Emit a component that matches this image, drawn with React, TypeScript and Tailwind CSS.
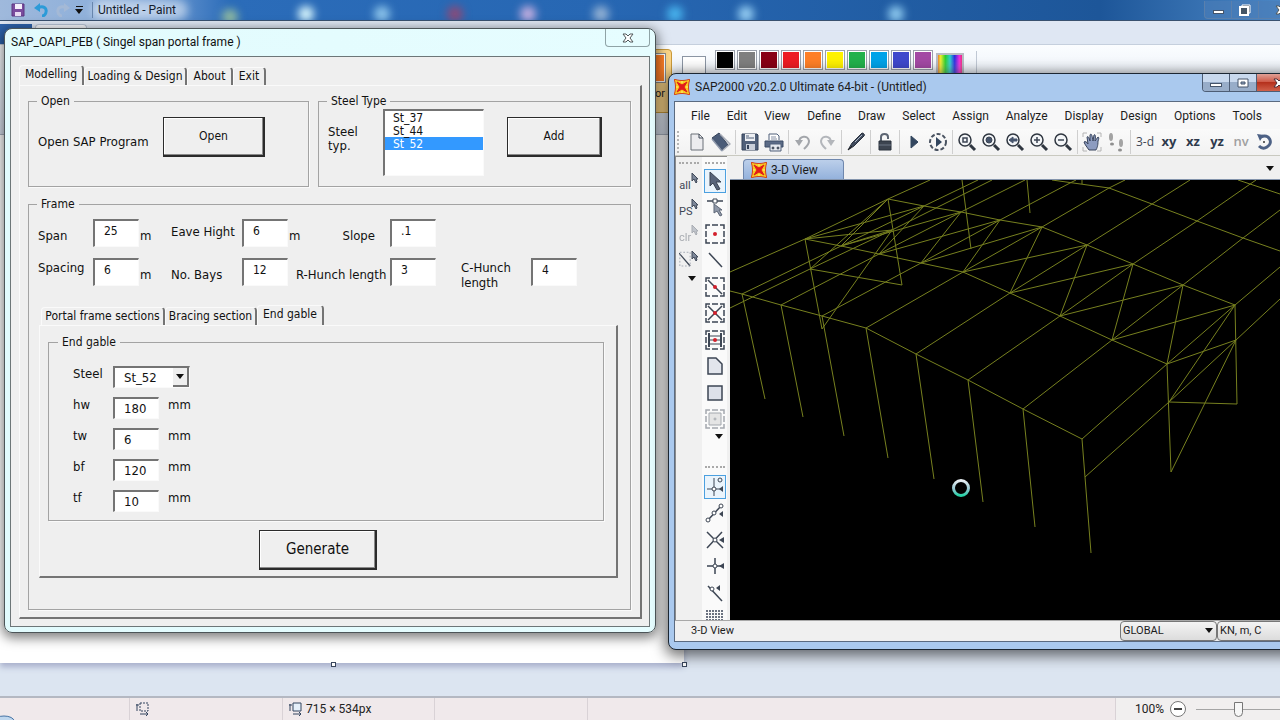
import { useState, type ReactNode } from "react";

const swatches = [
  "bg-black",
  "bg-[#7f7f7f]",
  "bg-[#880015]",
  "bg-[#ed1c24]",
  "bg-[#ff7f27]",
  "bg-[#fff200]",
  "bg-[#22b14c]",
  "bg-[#00a2e8]",
  "bg-[#3f48cc]",
  "bg-[#a349a4]",
];

const menus = [
  "File",
  "Edit",
  "View",
  "Define",
  "Draw",
  "Select",
  "Assign",
  "Analyze",
  "Display",
  "Design",
  "Options",
  "Tools",
];

// polylines of the portal frame model
const frameLines = [
  "0,92 75,59 158,19 200,0",
  "0,128 80,89 162,50 262,0",
  "12,114 111,66 194,26 248,0",
  "51,125 149,74 231,32 295,0",
  "92,136 191,83 270,40 340,3 346,0",
  "136,148 233,92 312,47 379,8 395,0",
  "186,174 280,113 357,65 422,24 460,0",
  "238,200 330,136 403,84 467,41 526,0",
  "293,229 382,160 453,105 513,58 550,30 590,0",
  "352,259 437,184 505,125 550,87 600,45",
  "355,297 439,222 506,160 550,119 600,72",
  "0,111 12,114 51,125 92,136 136,148 186,174 238,200 293,229 352,259",
  "75,59 111,66 149,74 191,83 233,92 280,113 330,136 382,160 437,184",
  "158,19 194,26 231,32 270,40 312,47 357,65 403,84 453,105 505,125",
  "322,0 379,8 422,24 467,41 513,58 550,71 600,90",
  "508,0 520,4 550,14 600,32",
  "12,114 35,219",
  "51,125 73,237",
  "92,136 114,256",
  "136,148 158,278",
  "186,174 204,299",
  "238,200 253,322",
  "293,229 305,347",
  "352,259 361,373",
  "158,19 172,105 80,89",
  "75,59 92,149 162,50",
  "232,0 241,69",
  "297,0 300,33",
  "352,0 352,4",
  "158,19 80,89",
  "158,19 111,66",
  "75,59 162,50",
  "75,59 194,26",
  "111,66 162,50",
  "111,66 231,32",
  "149,74 194,26",
  "149,74 270,40",
  "191,83 231,32",
  "191,83 312,47",
  "233,92 270,40",
  "233,92 357,65",
  "280,113 312,47",
  "280,113 403,84",
  "330,136 357,65",
  "330,136 453,105",
  "382,160 403,84",
  "382,160 505,125",
  "437,184 453,105",
  "437,184 506,160",
  "439,222 505,125",
  "439,222 507,224 505,125",
  "437,184 441,292 506,160",
];

function Svg({ children, size = "size-5" }: { children: ReactNode; size?: string }) {
  return (
    <svg viewBox="0 0 20 20" fill="none" stroke="#3d4654" className={`${size} shrink-0`} aria-hidden="true">
      {children}
    </svg>
  );
}

function SapLogo() {
  return (
    <svg viewBox="0 0 16 16" className="size-4 shrink-0" aria-hidden="true">
      <path d="M0 0C5 2 11 2 16 0C14 5 14 11 16 16C11 14 5 14 0 16C2 11 2 5 0 0Z" fill="#f9c81e" stroke="#d2401c" />
      <path d="M3 3L8 6L13 3L10 8L13 13L8 10L3 13L6 8Z" fill="#e11b1b" stroke="#e11b1b" />
      <path d="M8 2V4M8 12V14M2 8H4M12 8H14" stroke="#fff27a" />
    </svg>
  );
}

function CloseGlyph({ stroke = "#50585a" }: { stroke?: string }) {
  return (
    <svg viewBox="0 0 12 10" className="h-[10px] w-3 shrink-0" aria-hidden="true">
      <path d="M1 1H4L6 3L8 1H11L8 5L11 9H8L6 7L4 9H1L4 5Z" fill="#fff" stroke={stroke} />
    </svg>
  );
}

const docIcon = (
  <Svg>
    <path d="M4 2H12L16 6V18H4Z" fill="#ececef" stroke="#6b7078" />
    <path d="M12 2V6H16" stroke="#3d4654" />
  </Svg>
);
const openIcon = (
  <Svg>
    <path d="M1 6L8 1L17 13L11 18Z" fill="#4b5c78" stroke="#35435a" />
    <path d="M9 2L19 12L11 19" fill="none" stroke="#a8adb8" strokeWidth="1.5" />
    <path d="M1 7L11 19" stroke="#8c97ab" strokeWidth="1.5" />
  </Svg>
);
const saveIcon = (
  <Svg>
    <path d="M2 2H17L18 3V18H2Z" fill="#50607a" stroke="#35435a" />
    <path d="M5 2H15V9H5Z" fill="#eef0f4" stroke="none" />
    <path d="M6 4H9M6 6H14" stroke="#50607a" />
    <path d="M6 12H15V18H6Z" fill="#c9cfda" stroke="none" />
    <path d="M8 13V17" stroke="#35435a" strokeWidth="2" />
  </Svg>
);
const printIcon = (
  <Svg>
    <path d="M5 8V2H13L15 4V8" fill="#fff" stroke="#50607a" />
    <path d="M7 5H12M7 7H13" stroke="#8791a5" />
    <path d="M1 9H19V15H1Z" fill="#5b6b86" stroke="#3d4c66" />
    <path d="M6 12H17V19H6Z" fill="#e5e8ee" stroke="#50607a" />
    <circle cx="9" cy="16" r="1" fill="#50607a" />
    <circle cx="14" cy="16" r="1" fill="#50607a" />
  </Svg>
);
const undoIcon = (
  <Svg>
    <path d="M6 11C6 3 15 3 16 9C16 13 13 15 11 17" stroke="#a3a6ab" strokeWidth="2" />
    <path d="M2 8H10L6 14Z" fill="#a3a6ab" stroke="none" />
  </Svg>
);
const redoIcon = (
  <Svg>
    <path d="M14 11C14 3 5 3 4 9C4 13 7 15 9 17" stroke="#b3b6bb" strokeWidth="2" />
    <path d="M18 8H10L14 14Z" fill="#b3b6bb" stroke="none" />
  </Svg>
);
const penIcon = (
  <Svg>
    <path d="M2 18L6 11L16 1C18 1 19 3 18 4L8 14Z" fill="#3f4a5c" stroke="#2a3240" />
    <path d="M9 10L16 3" stroke="#aeb8c8" />
    <path d="M2 18L6 14" stroke="#222" />
  </Svg>
);
const lockIcon = (
  <Svg>
    <path d="M6 9V5C6 1 13 1 13 5V7" stroke="#5d6673" strokeWidth="2" />
    <path d="M4 9H16V18H4Z" fill="#3c4450" stroke="#2b323c" />
    <path d="M4 13H16" stroke="#6d7785" />
  </Svg>
);
const playIcon = (
  <Svg>
    <path d="M7 4L14 10L7 16Z" fill="#33465f" stroke="#33465f" />
  </Svg>
);
const runIcon = (
  <Svg>
    <circle cx="10" cy="10" r="8" stroke="#4a5361" strokeWidth="2" strokeDasharray="4 2" />
    <path d="M8 5L14 10L8 15Z" fill="#33465f" stroke="none" />
  </Svg>
);
const lens = (inner: ReactNode) => (
  <Svg>
    <circle cx="8" cy="8" r="6" fill="#f4f6f8" stroke="#2f3640" strokeWidth="1.5" />
    <path d="M13 13L18 18" stroke="#2f3640" strokeWidth="3" />
    {inner}
  </Svg>
);
const handIcon = (
  <Svg>
    <path d="M1 5V1H5M15 1H19V5M19 15V19H15M5 19H1V15" stroke="#b4b4b4" />
    <path
      d="M7 18C5 15 3 13 2 10C3 9 5 10 6 12L5 5C6 4 7 5 8 9L8 3C9 1 10 2 11 9L12 3C13 2 14 3 13 9L16 5C17 5 17 7 16 9C16 14 15 16 14 18Z"
      fill="#8d9cc0"
      stroke="#38445c"
    />
  </Svg>
);
const feetIcon = (
  <Svg>
    <ellipse cx="5" cy="5" rx="2" ry="4" fill="#a3a3a3" stroke="none" />
    <ellipse cx="6" cy="12" rx="2" ry="1.5" fill="#8f8f8f" stroke="none" />
    <ellipse cx="15" cy="11" rx="2" ry="4" fill="#a3a3a3" stroke="none" />
    <ellipse cx="14" cy="18" rx="2" ry="1.5" fill="#8f8f8f" stroke="none" />
  </Svg>
);
const rotateIcon = (
  <Svg>
    <path d="M6 5C14 1 19 11 12 15C9 17 6 16 4 14" stroke="#4d6185" strokeWidth="3" />
    <path d="M2 2L9 3L5 9Z" fill="#4d6185" stroke="none" />
    <circle cx="9" cy="10" r="1" fill="#333" stroke="none" />
  </Svg>
);
const eraserIcon = (
  <Svg>
    <path d="M2 13L9 5L17 8L11 16H3Z" fill="#dfe3ea" stroke="#3d4654" />
  </Svg>
);

type Tool = { name: string; icon?: ReactNode; text?: string; tone?: string };

const toolGroups: Tool[][] = [
  [
    { name: "New model", icon: docIcon },
    { name: "Open file", icon: openIcon },
  ],
  [
    { name: "Save", icon: saveIcon },
    { name: "Print", icon: printIcon },
  ],
  [
    { name: "Undo", icon: undoIcon },
    { name: "Redo", icon: redoIcon },
  ],
  [{ name: "Refresh window", icon: penIcon }],
  [{ name: "Lock model", icon: lockIcon }],
  [
    { name: "Run analysis", icon: playIcon },
    { name: "Model-alive", icon: runIcon },
  ],
  [
    { name: "Rubber band zoom", icon: lens(<path d="M6 6H10V10H6Z" strokeWidth="1.5" />) },
    { name: "Full view", icon: lens(<circle cx="8" cy="8" r="3" fill="#46546c" />) },
    { name: "Previous zoom", icon: lens(<path d="M4 8L8 5V7H12V9H8V11Z" fill="#46546c" stroke="#46546c" />) },
    { name: "Zoom in", icon: lens(<path d="M5 8H11M8 5V11" strokeWidth="1.5" />) },
    { name: "Zoom out", icon: lens(<path d="M5 8H11" strokeWidth="1.5" />) },
  ],
  [
    { name: "Pan", icon: handIcon },
    { name: "Walk", icon: feetIcon },
  ],
  [
    { name: "3-d view", text: "3-d", tone: "text-[#3d4654]" },
    { name: "xy view", text: "xy", tone: "font-bold text-[#2f3a4c]" },
    { name: "xz view", text: "xz", tone: "font-bold text-[#2f3a4c]" },
    { name: "yz view", text: "yz", tone: "font-bold text-[#2f3a4c]" },
    { name: "nv view", text: "nv", tone: "font-semibold text-[#a0a0a0]" },
    { name: "Rotate 3D", icon: rotateIcon },
    { name: "Perspective", icon: eraserIcon },
  ],
];

const dashBox = <path d="M1 5V1H5M7 1H13M15 1H19V5M19 7V13M19 15V19H15M13 19H7M5 19H1V15M1 13V7" strokeWidth="1.5" />;
const redDot = <circle cx="10" cy="10" r="2" fill="#d3202c" stroke="none" />;
const leftArrow = <path d="M19 7V13L14 10Z" fill="#3d4654" stroke="none" />;

const drawTools: { name: string; icon: ReactNode; active?: boolean }[] = [
  {
    name: "Pointer",
    active: true,
    icon: (
      <Svg>
        <path d="M5 1V15L8 12L12 19L15 18L11 11H16Z" fill="#58647a" stroke="#3a4352" />
      </Svg>
    ),
  },
  {
    name: "Reshape",
    icon: (
      <Svg>
        <path d="M2 4H8M12 4H18" strokeWidth="1.5" />
        <path d="M8 2H12V6H8Z" fill="#fff" />
        <path d="M9 7V16L12 14L15 19L17 18L14 13H17Z" fill="#8f98a8" stroke="#5f6878" />
      </Svg>
    ),
  },
  { name: "Draw joint", icon: <Svg>{dashBox}{redDot}</Svg> },
  {
    name: "Draw frame",
    icon: (
      <Svg>
        <path d="M4 3L17 17" strokeWidth="1.5" />
      </Svg>
    ),
  },
  {
    name: "Quick draw frame",
    icon: (
      <Svg>
        {dashBox}
        <path d="M3 3L17 17" strokeWidth="1.5" />
        {redDot}
      </Svg>
    ),
  },
  {
    name: "Quick draw braces",
    icon: (
      <Svg>
        {dashBox}
        <path d="M3 3L17 17M17 3L3 17" strokeWidth="1.5" />
        {redDot}
      </Svg>
    ),
  },
  {
    name: "Quick draw secondary beams",
    icon: (
      <Svg>
        {dashBox}
        <path d="M4 3V17M16 3V17" strokeWidth="2" />
        <path d="M5 6H15M5 10H15M5 14H15" />
        {redDot}
      </Svg>
    ),
  },
  {
    name: "Draw poly area",
    icon: (
      <Svg>
        <path d="M3 2H11L17 8V18H3Z" fill="#e2e5ec" strokeWidth="1.5" />
      </Svg>
    ),
  },
  {
    name: "Draw rectangular area",
    icon: (
      <Svg>
        <path d="M3 3H17V17H3Z" fill="#dde1ea" strokeWidth="1.5" />
      </Svg>
    ),
  },
  {
    name: "Quick draw area",
    icon: (
      <Svg>
        <g opacity="0.45">
          {dashBox}
          <path d="M4 4H16V16H4Z" fill="#ccc" />
          <circle cx="10" cy="10" r="1" />
        </g>
      </Svg>
    ),
  },
];

const snapTools: { name: string; icon: ReactNode; active?: boolean }[] = [
  {
    name: "Snap to points",
    active: true,
    icon: (
      <Svg>
        <path d="M9 1V19M2 12H16" />
        <circle cx="9" cy="12" r="2" fill="#fff" />
        <circle cx="15" cy="3" r="2" />
        <path d="M18 9V15L14 12Z" fill="#3d4654" stroke="none" />
      </Svg>
    ),
  },
  {
    name: "Snap to ends",
    icon: (
      <Svg>
        <path d="M3 17L16 3" strokeWidth="1.5" />
        <circle cx="3" cy="17" r="2" fill="#fff" />
        <circle cx="9" cy="10" r="2" fill="#fff" />
        <circle cx="16" cy="3" r="2" fill="#fff" />
        <path d="M18 8V14L14 11Z" fill="#3d4654" stroke="none" />
      </Svg>
    ),
  },
  {
    name: "Snap to intersections",
    icon: (
      <Svg>
        <path d="M2 2L18 18M17 2L2 18" strokeWidth="1.5" />
        <circle cx="10" cy="10" r="2" fill="#fff" />
        {leftArrow}
      </Svg>
    ),
  },
  {
    name: "Snap to perpendicular",
    icon: (
      <Svg>
        <path d="M10 2V18M2 10H16" strokeWidth="1.5" />
        <circle cx="10" cy="10" r="2" fill="#fff" />
        {leftArrow}
      </Svg>
    ),
  },
  {
    name: "Snap to lines",
    icon: (
      <Svg>
        <path d="M3 3L17 18" strokeWidth="1.5" />
        <circle cx="7" cy="6" r="2" fill="#fff" />
        <path d="M15 2V8L11 5Z" fill="#3d4654" stroke="none" />
      </Svg>
    ),
  },
  {
    name: "Snap to fine grid",
    icon: (
      <Svg>
        <path d="M1 2H19M1 5H19M1 8H19M1 11H19M1 14H19" stroke="#6b7280" strokeWidth="2" strokeDasharray="2 1" />
      </Svg>
    ),
  },
];

function SideButton({ name, icon, active }: { name: string; icon: ReactNode; active?: boolean }) {
  return (
    <button
      type="button"
      aria-label={name}
      className={`flex h-6 w-[22px] shrink-0 items-center justify-center border ${
        active ? "border-[#4ba0e0] bg-[#eaf4fc]" : "border-transparent"
      }`}
    >
      {icon}
    </button>
  );
}

function SelectButton({ name, text, faded }: { name: string; text?: string; faded?: boolean }) {
  return (
    <button
      type="button"
      aria-label={name}
      className={`mb-[2px] flex h-6 w-[20px] items-start text-[11px] text-[#3d4654] ${faded ? "opacity-40" : ""}`}
    >
      {text ? (
        <span className="w-3 shrink-0 pt-[6px]">{text}</span>
      ) : (
        <svg viewBox="0 0 14 20" className="h-5 w-3 shrink-0" aria-hidden="true">
          <path d="M0 2L13 17" stroke="#3d4654" strokeWidth="1.5" />
          <path d="M1 1H13V17H1Z" fill="none" stroke="#9aa2ae" strokeDasharray="2 2" />
        </svg>
      )}
      <svg viewBox="0 0 8 12" className="h-3 w-2 shrink-0" aria-hidden="true">
        <path d="M1 1V9L3 7L5 11L6 10L5 7H7Z" fill="#7d8799" stroke="#3f4858" />
      </svg>
    </button>
  );
}

function Grip() {
  return <div className="mb-1 h-[2px] w-5 shrink-0 border-t-2 border-dotted border-[#a9a9a9]" />;
}

function DropTriangle() {
  return (
    <svg viewBox="0 0 8 5" className="h-[5px] w-2 shrink-0" aria-hidden="true">
      <path d="M0 0H8L4 5Z" fill="#111" />
    </svg>
  );
}

function PaintWindow() {
  return (
    <div className="flex min-h-screen flex-col font-[Roboto,'Open_Sans',sans-serif] text-[12px] text-[#222]">
      <header className="relative flex h-[21px] shrink-0 items-center overflow-hidden border-b border-[#39516f] bg-[linear-gradient(90deg,#9fb9dc_0,#8fb0da_90px,#6f9bd2_160px,#2b6cb9_230px,#2767b3_600px,#1d5699_1100px,#4b86c4_1280px)]">
        <span className="absolute left-[222px] top-[9px] size-4 rounded-full bg-[#8fb9a0] blur-xs" />
        <span className="absolute left-[298px] top-[6px] size-4 rounded-full bg-[#d5f4fc] blur-xs" />
        <span className="absolute left-[374px] top-[6px] size-4 rounded-full bg-[#8cc4ea] blur-xs" />
        <span className="absolute left-[447px] top-[6px] size-4 rounded-full bg-[#8a4a78] blur-xs" />
        <span className="absolute left-[520px] top-[6px] size-4 rounded-full bg-[#c3aee0] blur-xs" />
        <span className="absolute left-[593px] top-[6px] size-4 rounded-full bg-[#94b2d4] blur-xs" />
        <span className="absolute left-[667px] top-[6px] size-4 rounded-full bg-[#48b4ee] blur-xs" />
        <span className="absolute left-[738px] top-[6px] size-4 rounded-full bg-[#94cdf2] blur-xs" />
        <span className="absolute left-[888px] top-[6px] size-4 rounded-full bg-[#8cc8ee] blur-xs" />
        <span className="absolute left-[92px] top-0 h-5 w-24 rounded-full bg-white/50 blur-xs" />
        <div className="relative flex w-full items-center">
          <button type="button" aria-label="Save" className="ml-[11px] mr-[9px]">
            <svg viewBox="0 0 14 14" className="size-[14px]" aria-hidden="true">
              <path d="M1 1H13V13H1Z" fill="#7a4c9e" stroke="#5c3680" />
              <path d="M4 1H11V6H4Z" fill="#f4eefa" />
              <path d="M4 9H10V13H4Z" fill="#e7d9f2" />
            </svg>
          </button>
          <button type="button" aria-label="Undo" className="mr-[8px]">
            <svg viewBox="0 0 14 14" className="size-[14px]" aria-hidden="true">
              <path d="M4 5C9 2 13 5 12 9C12 11 10 13 8 13" fill="none" stroke="#2c9bd8" strokeWidth="3" />
              <path d="M0 5L6 0V9Z" fill="#2c9bd8" />
            </svg>
          </button>
          <button type="button" aria-label="Redo" className="mr-[5px]">
            <svg viewBox="0 0 14 14" className="size-[14px]" aria-hidden="true">
              <path d="M10 5C5 2 1 5 2 9C2 11 4 13 6 13" fill="none" stroke="#a4b9d6" strokeWidth="3" />
              <path d="M14 5L8 0V9Z" fill="#a4b9d6" />
            </svg>
          </button>
          <button type="button" aria-label="Customize toolbar" className="flex flex-col items-center gap-[2px] border-r border-[#6886ad] py-[4px] pr-[9px]">
            <span className="h-px w-[7px] bg-[#111]" />
            <DropTriangle />
          </button>
          <h1 className="ml-[5px] text-[12px] leading-5 text-[#14202e]">Untitled - Paint</h1>
          <div className="ml-auto -mr-[24px] flex h-[18px] rounded-b border border-t-0 border-[#5a80ad] bg-[#4b7db8]/60">
            <button type="button" aria-label="Minimize" className="flex w-[27px] items-center justify-center border-r border-[#5a80ad]">
              <span className="mt-1 h-1 w-[11px] border border-[#44546b] bg-white" />
            </button>
            <button type="button" aria-label="Restore" className="flex w-[27px] items-center justify-center border-r border-[#5a80ad]">
              <svg viewBox="0 0 12 12" className="size-3" aria-hidden="true">
                <path d="M3 1H11V9H3Z" fill="#456" stroke="#fff" />
                <path d="M1 3H9V11H1Z" fill="#456" stroke="#fff" strokeWidth="2" />
              </svg>
            </button>
            <button type="button" aria-label="Close Paint" className="flex w-[44px] items-center justify-center">
              <CloseGlyph />
            </button>
          </div>
        </div>
      </header>

      <div className="flex h-[24px] shrink-0 gap-[3px] border-b border-[#c5cfdd] bg-[#dfe7f3] pt-[3px]">
        <button type="button" aria-label="Paint menu" className="w-8 bg-[#2c62ab]" />
        <button type="button" aria-label="Home" className="w-[52px] rounded-t border border-b-0 border-[#b8c4d6] bg-[#fafcff]" />
      </div>

      <div className="flex h-[90px] shrink-0 items-start border-b border-[#a9b2c0] bg-[linear-gradient(#fbfdff,#eef3fa_30px,#d5dde9)] pl-[632px] pt-[4px]">
        <button type="button" className="h-16 w-[40px] shrink-0 rounded-sm border border-[#c99a3c] bg-[#fcd587] px-1 pt-[3px] text-[11px] leading-[13px]">
          <span className="mx-auto mb-1 block h-[30px] w-[28px] border border-[#8b8b8b] bg-[#ff7f27] outline-1 -outline-offset-2 outline-white" />
          Color 1
        </button>
        <button type="button" aria-label="Color 2" className="ml-[10px] mt-[7px] h-6 w-6 shrink-0 border border-[#8b95a3] bg-white" />
        <div className="ml-[9px] mt-[1px] flex gap-[2px]">
          {swatches.map((c) => (
            <button key={c} type="button" aria-label="Palette color" className="size-5 border border-[#9aa0ab] bg-white p-[1px]">
              <span className={`block size-4 ${c}`} />
            </button>
          ))}
        </div>
        <button
          type="button"
          aria-label="Edit colors"
          className="ml-[3px] mt-[4px] h-7 w-7 border-2 border-[#b8bcc4] bg-[linear-gradient(transparent,rgba(255,255,255,0.3)),linear-gradient(90deg,#e22,#ee2,#2c2,#2cc,#22d,#e2d,#e22)] bg-origin-border"
        />
        <span className="ml-3 mt-[2px] h-20 w-px bg-[#c0c8d4]" />
      </div>

      <main className="flex-1 bg-[#dce5f1]">
        <div className="relative h-[528px] w-[684px] bg-white shadow-[0_4px_6px_#a9b0cc]">
          <span className="absolute -bottom-[4px] left-[331px] size-[5px] border border-[#39465c] bg-white" />
          <span className="absolute -bottom-[4px] -right-[3px] size-[5px] border border-[#39465c] bg-white" />
        </div>
      </main>

      <footer className="flex h-6 shrink-0 items-center border-t-2 border-[#b4b8c2] bg-[#f0e9eb] leading-5">
        <span className="h-full w-[130px] border-r border-[#d9d2d6]">
          <svg viewBox="0 0 16 6" className="mt-4 h-[6px] w-4" aria-hidden="true">
            <ellipse cx="4" cy="7" rx="10" ry="5" fill="#bfd7ee" stroke="#4573a5" />
          </svg>
        </span>
        <span className="flex h-full w-[153px] items-center border-r border-[#d9d2d6] pl-[5px]">
          <svg viewBox="0 0 14 14" className="size-[14px]" fill="none" stroke="#33455f" aria-hidden="true">
            <path d="M1 3H4M2 2V9M5 12H13M11 10L13 12L11 14" />
            <path d="M5 1H13V9H5Z" strokeDasharray="2 1" />
          </svg>
        </span>
        <span className="flex h-full w-[152px] items-center gap-[4px] border-r border-[#d9d2d6] pl-[5px]">
          <svg viewBox="0 0 14 14" className="size-[14px]" fill="none" stroke="#33455f" aria-hidden="true">
            <path d="M1 3H4M2 2V9M5 12H13M11 10L13 12L11 14" />
            <path d="M5 1H13V9H5Z" fill="#e6f0fa" />
          </svg>
          715 × 534px
        </span>
        <span className="h-full w-[153px] border-r border-[#d9d2d6]" />
        <div className="-mr-10 ml-auto flex h-full items-center border-l border-[#d9d2d6] bg-[#f1efef] pl-[19px]">
          <span className="mr-[6px]">100%</span>
          <button type="button" aria-label="Zoom out" className="mr-[10px] flex size-4 items-center justify-center rounded-full border border-[#777] bg-white">
            <span className="h-[2px] w-2 bg-[#444]" />
          </button>
          <input
            type="range"
            aria-label="Zoom"
            defaultValue={33}
            className="h-4 w-[124px] appearance-none bg-[linear-gradient(#a5a5a5,#a5a5a5)] bg-[length:100%_1px] bg-center bg-no-repeat [&::-webkit-slider-thumb]:h-[15px] [&::-webkit-slider-thumb]:w-[9px] [&::-webkit-slider-thumb]:appearance-none [&::-webkit-slider-thumb]:rounded-b-md [&::-webkit-slider-thumb]:border [&::-webkit-slider-thumb]:border-[#777] [&::-webkit-slider-thumb]:bg-[#f7f7f7]"
          />
        </div>
      </footer>
    </div>
  );
}

const sunken = "border-t-2 border-l-2 border-b border-r border-t-[#747474] border-l-[#747474] border-b-[#fafafa] border-r-[#fafafa] bg-white";

function FrameInput({ id, value }: { id: string; value: string }) {
  return <input id={id} type="text" defaultValue={value} className={`h-7 w-[46px] px-[9px] pb-[6px] text-[12px] ${sunken}`} />;
}

const tabBase =
  "flex items-center justify-center whitespace-nowrap rounded-t-sm border-l border-t border-r-2 border-l-[#fafafa] border-t-[#fafafa] border-r-[#747474] text-[12px]";
const tabPanel = "border-b-2 border-l border-r-2 border-t border-[#747474] border-l-[#fafafa] border-t-[#fafafa]";
const groupBox = "border border-[#a3a3a3] shadow-[1px_1px_0_#fafafa]";
const pushButton = "border border-b-2 border-r-2 border-[#2b2b2b] bg-[#efefef] shadow-[inset_-1px_-1px_0_#8a8a8a,inset_1px_1px_0_#fff]";

function PebDialog() {
  const [page, setPage] = useState("Modelling");
  const [sections, setSections] = useState("End gable");

  return (
    <section className="absolute left-[4px] top-[28px] w-[652px] rounded-lg border border-[#4c5558] bg-[linear-gradient(90deg,#e2fbfd,#e6fdff)] px-[5px] pb-[5px] font-['DejaVu_Sans_Condensed','DejaVu_Sans',sans-serif] text-[13px] leading-[15px] text-[#111] shadow-[0_3px_12px_2px_rgba(0,0,0,0.5)]">
      <div className="flex h-[27px] items-start justify-between">
        <h2 className="pl-[1px] pt-[4px] font-[Roboto,'Open_Sans',sans-serif] text-[12px] leading-[18px]">
          SAP_OAPI_PEB ( Singel span portal frame )
        </h2>
        <button type="button" aria-label="Close" className="flex h-[18px] w-[45px] items-center justify-center rounded-b border border-t-0 border-[#8fa3a6]">
          <CloseGlyph />
        </button>
      </div>

      <div className="border border-[#6d7678] bg-[#efefef] pb-[7px] pl-[8px] pr-[7px] pt-[8px]">
        <div className="flex items-end" role="tablist">
          {[
            ["Modelling", "w-[65px]"],
            ["Loading & Design", "w-[103px]"],
            ["About", "w-[46px]"],
            ["Exit", "w-[33px]"],
          ].map(([name, width]) => (
            <button
              key={name}
              type="button"
              role="tab"
              aria-selected={page === name}
              onClick={() => setPage(name)}
              className={`${tabBase} ${width} ${page === name ? "h-5 pb-[2px]" : "h-[18px]"}`}
            >
              {name}
            </button>
          ))}
        </div>

        <div className={`pb-[7px] pl-[8px] pr-[9px] pt-[7px] ${tabPanel}`}>
          <div className="flex gap-[9px]">
            <fieldset className={`flex h-[94px] w-[281px] px-[9px] ${groupBox}`}>
              <legend className="ml-[-1px] px-1 text-[12px] leading-4">Open</legend>
              <div className="flex items-start pt-[8px]">
                <span className="w-[125px] pt-[17px]">Open SAP Program</span>
                <button type="button" className={`h-10 w-[102px] text-[12px] ${pushButton}`}>
                  Open
                </button>
              </div>
            </fieldset>
            <fieldset className={`h-[94px] flex-1 px-[9px] ${groupBox}`}>
              <legend className="ml-[-1px] px-1 text-[12px] leading-4">Steel Type</legend>
              <div className="flex items-start">
                <label htmlFor="steel-type" className="w-[55px] pr-4 pt-[16px] leading-[14px]">
                  Steel typ.
                </label>
                <select
                  id="steel-type"
                  size={5}
                  defaultValue="St_52"
                  className={`h-[67px] w-[101px] overflow-hidden text-[12px] ${sunken}`}
                >
                  {["St_37", "St_44", "St_52"].map((s) => (
                    <option
                      key={s}
                      className="h-[13px] min-h-0 px-[8px] py-0 leading-[13px] checked:bg-[linear-gradient(#3399ff,#3399ff)] checked:text-white"
                    >
                      {s}
                    </option>
                  ))}
                </select>
                <button type="button" className={`ml-[23px] mt-[8px] h-10 w-[95px] text-[12px] ${pushButton}`}>
                  Add
                </button>
              </div>
            </fieldset>
          </div>

          <fieldset className={`mt-[9px] pb-[31px] pl-[9px] pr-[8px] ${groupBox}`}>
            <legend className="ml-[-1px] px-1 text-[12px] leading-4">Frame</legend>
            <div className="grid grid-cols-[55px_47px_31px_71px_47px_101px_47px_94px_47px] gap-y-[11px] pt-[7px]">
              <label htmlFor="span" className="self-end pb-1">Span</label>
              <FrameInput id="span" value="25" />
              <span className="self-end pb-1">m</span>
              <label htmlFor="eave" className="self-center pb-1">Eave Hight</label>
              <FrameInput id="eave" value="6" />
              <div className="flex items-end justify-between pb-1 pr-[15px]">
                <span>m</span>
                <label htmlFor="slope">Slope</label>
              </div>
              <FrameInput id="slope" value=".1" />
              <span />
              <span />
              <label htmlFor="spacing" className="pt-[2px]">Spacing</label>
              <FrameInput id="spacing" value="6" />
              <span className="self-start pt-[9px]">m</span>
              <label htmlFor="bays" className="pt-[9px]">No. Bays</label>
              <FrameInput id="bays" value="12" />
              <label htmlFor="r-hunch" className="whitespace-nowrap pl-[7px] pt-[9px]">R-Hunch length</label>
              <FrameInput id="r-hunch" value="3" />
              <label htmlFor="c-hunch" className="pl-[24px] pt-[2px]">C-Hunch length</label>
              <FrameInput id="c-hunch" value="4" />
            </div>

            <div className="ml-[1px] mr-[4px] mt-[15px]">
              <div className="flex items-end pl-[2px]" role="tablist">
                {[
                  ["Portal frame sections", "w-[124px]"],
                  ["Bracing section", "w-[92px]"],
                  ["End gable", "w-[67px]"],
                ].map(([name, width]) => (
                  <button
                    key={name}
                    type="button"
                    role="tab"
                    aria-selected={sections === name}
                    onClick={() => setSections(name)}
                    className={`${tabBase} ${width} ${sections === name ? "h-5 pb-[2px]" : "h-[18px]"}`}
                  >
                    {name}
                  </button>
                ))}
              </div>
              <div className={`px-[8px] pb-[6px] pt-[8px] ${tabPanel}`}>
                <fieldset className={`mr-[4px] px-[24px] pb-[8px] ${groupBox}`}>
                  <legend className="ml-[-15px] px-1 text-[12px] leading-4">End gable</legend>
                  <div className="flex flex-col gap-[9px] pt-[16px]">
                    <div className="flex">
                      <label htmlFor="gable-steel" className="w-10">Steel</label>
                      <span className="relative">
                        <select
                          id="gable-steel"
                          defaultValue="St_52"
                          className={`h-[22px] w-[77px] appearance-none pl-[9px] ${sunken}`}
                        >
                          <option>St_52</option>
                          <option>St_44</option>
                          <option>St_37</option>
                        </select>
                        <span className="pointer-events-none absolute right-px top-[2px] flex h-[19px] w-4 items-center justify-center border-b-2 border-r-2 border-[#747474] bg-[#efefef]">
                          <DropTriangle />
                        </span>
                      </span>
                    </div>
                    {[
                      ["hw", "180"],
                      ["tw", "6"],
                      ["bf", "120"],
                      ["tf", "10"],
                    ].map(([name, value]) => (
                      <div key={name} className="flex">
                        <label htmlFor={name} className="w-10">{name}</label>
                        <input id={name} type="text" defaultValue={value} className={`h-[22px] w-[46px] pl-[9px] ${sunken}`} />
                        <span className="pl-[9px]">mm</span>
                      </div>
                    ))}
                  </div>
                </fieldset>
                <button type="button" className={`ml-[211px] mt-[9px] block h-10 w-[118px] text-[15px] ${pushButton}`}>
                  Generate
                </button>
              </div>
            </div>
          </fieldset>
        </div>
      </div>
    </section>
  );
}

function SapWindow() {
  return (
    <section className="absolute -right-[30px] left-[668px] top-[73px] rounded-lg border border-[#1c2733] bg-[#aac9ee] px-[5px] pb-[7px] font-[Roboto,'Open_Sans',sans-serif] text-[12px] text-[#1c1c1c] shadow-[0_3px_14px_3px_rgba(0,0,0,0.55)]">
      <div className="flex h-[27px] items-start">
        <div className="flex items-center gap-[5px] pt-[5px]">
          <SapLogo />
          <h2 className="leading-4">SAP2000 v20.2.0 Ultimate 64-bit - (Untitled)</h2>
        </div>
        <div className="ml-auto mr-[2px] flex h-[18px] overflow-hidden rounded-b border border-t-0 border-[#4d5d75]">
          <button type="button" aria-label="Minimize" className="flex w-[27px] items-center justify-center border-r border-[#4d5d75] bg-[linear-gradient(#c9d9ee_50%,#98adc9_50%)]">
            <span className="mt-1 h-1 w-3 border border-[#46556b] bg-white" />
          </button>
          <button type="button" aria-label="Maximize" className="flex w-[27px] items-center justify-center border-r border-[#4d5d75] bg-[linear-gradient(#c9d9ee_50%,#98adc9_50%)]">
            <svg viewBox="0 0 12 10" className="h-[10px] w-3" aria-hidden="true">
              <path d="M1 1H11V9H1Z" fill="#fff" stroke="#46556b" />
              <path d="M4 4H8V6H4Z" fill="#8fa4c2" stroke="#46556b" />
            </svg>
          </button>
          <button type="button" aria-label="Close" className="flex w-[44px] items-center justify-center bg-[linear-gradient(#e0a096_0,#cf5c4a_45%,#b5311d_50%,#d0604a)]">
            <CloseGlyph stroke="#50303a" />
          </button>
        </div>
      </div>

      <div className="border border-[#5a6a80] bg-[#f0f0f0]">
        <nav className="flex h-[27px] items-center gap-[17px] overflow-hidden bg-[#f7f7f8] pl-[16px]">
          {menus.map((m) => (
            <button key={m} type="button">{m}</button>
          ))}
        </nav>

        <div className="flex h-[27px] items-center overflow-hidden border-b border-[#c9c9c0] bg-[linear-gradient(#fafafa,#f2f2f2)] pl-[2px]">
          <span className="mr-[6px] h-[22px] shrink-0 border-l-2 border-dotted border-[#b5b5b5]" />
          {toolGroups.map((group, i) => (
            <div key={i} className={`flex shrink-0 items-center ${i > 0 ? "ml-[2px] border-l border-[#cfcfcf] pl-[2px]" : ""}`}>
              {group.map((t) => (
                <button
                  key={t.name}
                  type="button"
                  aria-label={t.name}
                  className={`flex h-6 w-6 items-center justify-center font-['Open_Sans','Noto_Sans',sans-serif] ${t.tone ?? ""} ${
                    t.text === "3-d" ? "text-[12px]" : "text-[13px]"
                  }`}
                >
                  {t.text ?? t.icon}
                </button>
              ))}
            </div>
          ))}
        </div>

        <div className="flex h-[464px]">
          <div className="flex w-[27px] shrink-0 flex-col border-l border-t border-[#8c8c8c] pl-[3px] pt-[5px]">
            <Grip />
            <div className="mt-1 flex flex-col">
              <SelectButton name="Select all" text="all" />
              <SelectButton name="Previous selection" text="PS" />
              <SelectButton name="Clear selection" text="clr" faded />
              <SelectButton name="Select by line" />
            </div>
            <div className="flex justify-end pr-[6px]">
              <DropTriangle />
            </div>
          </div>
          <div className="mr-[3px] flex w-[25px] shrink-0 flex-col items-center overflow-hidden border-t border-[#8c8c8c] bg-[#fafafa] pt-[5px]">
            <Grip />
            <div className="mt-px flex h-[262px] shrink-0 flex-col justify-between">
              {drawTools.map((t) => (
                <SideButton key={t.name} {...t} />
              ))}
            </div>
            <div className="mb-[27px] mt-[3px] self-end pr-1">
              <DropTriangle />
            </div>
            <Grip />
            <div className="mt-[3px] flex h-[156px] shrink-0 flex-col justify-between">
              {snapTools.map((t) => (
                <SideButton key={t.name} {...t} />
              ))}
            </div>
          </div>

          <div className="flex min-w-0 flex-1 flex-col">
            <div className="flex h-6 shrink-0 items-end border-b border-[#8494ac] pl-[13px]">
              <button
                type="button"
                className="flex h-5 w-[101px] items-center gap-1 rounded-t border border-b-0 border-[#6f87ad] bg-[linear-gradient(#bccfea,#94b2dc)] pl-[7px]"
              >
                <SapLogo />
                3-D View
              </button>
              <button type="button" aria-label="Window list" className="mb-[8px] ml-auto mr-[29px]">
                <DropTriangle />
              </button>
            </div>
            <div className="relative min-h-0 flex-1 overflow-hidden bg-black">
              <svg className="h-full w-full" aria-label="Portal frame model">
                <g fill="none" stroke="#77801f" strokeWidth="1">
                  {frameLines.map((p) => (
                    <polyline key={p} points={p} />
                  ))}
                </g>
              </svg>
              {/* busy cursor */}
              <svg viewBox="0 0 20 20" className="absolute left-[221px] top-[298px] size-5" aria-hidden="true">
                <defs>
                  <linearGradient id="busy" x1="0" y1="0" x2="0" y2="1">
                    <stop offset="0" stopColor="#e8eef2" />
                    <stop offset="0.6" stopColor="#8fc5cf" />
                    <stop offset="1" stopColor="#25d3a6" />
                  </linearGradient>
                </defs>
                <circle cx="10" cy="10" r="7.5" fill="none" stroke="url(#busy)" strokeWidth="3" />
              </svg>
            </div>
          </div>
        </div>

        <div className="flex h-[21px] items-center border-t border-[#a8a8a8]">
          <span className="pl-[16px] text-[11px]">3-D View</span>
          <label className="relative ml-auto h-5">
            <select
              aria-label="Coordinate system"
              className="h-5 w-[97px] appearance-none rounded-sm border border-[#777] bg-[linear-gradient(#f4f4f4,#dcdcdc)] pl-[2px] text-[11px]"
            >
              <option>GLOBAL</option>
            </select>
            <span className="pointer-events-none absolute right-1 top-[7px]">
              <DropTriangle />
            </span>
          </label>
          <select
            aria-label="Units"
            className="h-5 w-[86px] appearance-none rounded-sm border border-[#777] bg-[linear-gradient(#f4f4f4,#dcdcdc)] pl-[2px] text-[11px]"
          >
            <option>KN, m, C</option>
          </select>
        </div>
      </div>
    </section>
  );
}

export default function App() {
  return (
    <div className="relative min-h-screen overflow-hidden">
      <PaintWindow />
      <PebDialog />
      <SapWindow />
    </div>
  );
}
